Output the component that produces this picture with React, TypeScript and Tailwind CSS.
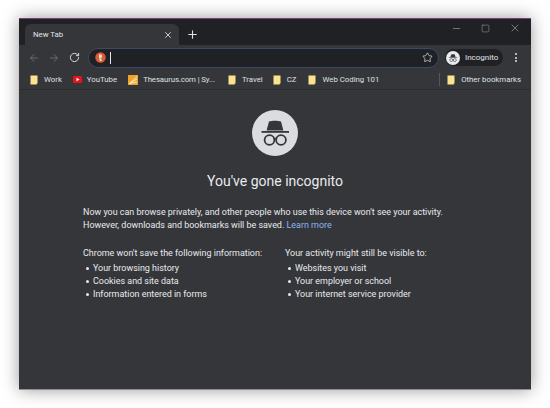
import { ArrowLeft, ArrowRight, RotateCw, Star, X, Plus, Minus, Square } from 'lucide-react';

function Folder() {
  return (
    <svg width="8" height="10" viewBox="0 0 8 10" className="shrink-0">
      <path d="M0.500 0.500h7v7.500l-1 1.500h-6z" fill="#fbe38e" />
      <path d="M6.500 8.300h1l-1 1.200z" fill="#c9a94a" />
    </svg>
  );
}

function Bookmark({ label, icon, className }: { label: string; icon: React.ReactNode; className: string }) {
  return (
    <div className={`flex items-center ${className}`}>
      {icon}
      <span className="whitespace-nowrap">{label}</span>
    </div>
  );
}

function Spy({ size, color, bg }: { size: number; color: string; bg: string }) {
  return (
    <svg width={size} height={size} viewBox="0 0 46 46">
      <path d="M17 11.500c3-1 9-1 12 0l2.400 9h-16.800z" fill={color} />
      <rect x="9.500" y="21" width="27.500" height="1.800" fill={color} />
      <circle cx="17.500" cy="30" r="4.900" fill={bg} stroke={color} strokeWidth="1.800" />
      <circle cx="29" cy="30" r="4.900" fill={bg} stroke={color} strokeWidth="1.800" />
      <path d="M21.500 29c1.200-.7 2.400-.7 3.600 0" fill="none" stroke={color} strokeWidth="1.600" />
    </svg>
  );
}

export default function App() {
  return (
    <div className="w-[550px] h-[408px] bg-white pt-[18px] pl-[19px] overflow-hidden" style={{ fontFamily: 'Roboto, sans-serif' }}>
      <div className="w-[512px] h-[372px] flex flex-col bg-[#35363a] border-t border-t-[#7a3f78] border-b border-b-[#8f918e] shadow-[0_0_16px_rgba(0,0,0,0.4)]">
        {/* tab strip */}
        <div className="h-[26px] shrink-0 bg-[#202124] flex items-end pl-[6px]">
          <div className="w-[154px] h-[21px] bg-[#35363a] rounded-t-[6px] flex items-center pl-[8px] pr-[6px] justify-between">
            <span className="text-[7.8px] text-[#e3e4e6]">New Tab</span>
            <X size={10} strokeWidth={2} className="text-[#e3e4e6]" />
          </div>
          <Plus size={13} strokeWidth={2} className="text-[#dfe1e5] ml-[7px] mb-[4px]" />
          <div className="ml-auto flex items-center self-start mt-[3px] text-[#d0d2d5]">
            <Minus size={11} strokeWidth={1} />
            <Square size={9} strokeWidth={1} className="ml-[19px]" />
            <X size={12} strokeWidth={1} className="ml-[19px] mr-[10px]" />
          </div>
        </div>
        {/* toolbar */}
        <div className="h-[25px] shrink-0 bg-[#35363a] flex items-center pl-[9px]">
          <ArrowLeft size={12} strokeWidth={1.6} className="text-[#75777b]" />
          <ArrowRight size={12} strokeWidth={1.6} className="text-[#75777b] ml-[8px]" />
          <RotateCw size={11} strokeWidth={2} className="text-[#e3e4e6] ml-[9px]" />
          <div className="ml-[8px] w-[351px] h-[20px] rounded-full bg-[#202124] border-[1.5px] border-[#3c4a63] flex items-center pl-[6px] pr-[5px]">
            <svg width="11" height="11" viewBox="0 0 11 11" className="shrink-0">
              <circle cx="5.500" cy="5.500" r="5.200" fill="#de5833" />
              <path d="M4 2.400c1.600-.6 3 .2 3 1.700 0 1-.5 1.400-.6 2.200l.4 2.600H4.800L4 4.600z" fill="#f4e4dc" />
              <circle cx="6.400" cy="6.400" r="1" fill="#67b346" />
            </svg>
            <div className="w-px h-[12px] bg-[#e3e4e6] ml-[4px]" />
            <Star size={11} strokeWidth={1.6} className="text-[#dfe1e5] ml-auto" />
          </div>
          <div className="ml-[6px] w-[58px] h-[17px] rounded-full bg-[#202124] flex items-center pl-[1px]">
            <div className="w-[14px] h-[14px] rounded-full bg-[#e8eaed] flex items-center justify-center overflow-hidden">
              <Spy size={14} color="#35363a" bg="#e8eaed" />
            </div>
            <span className="text-[8px] text-[#e3e4e6] ml-[5px]">Incognito</span>
          </div>
          <div className="ml-[12px] flex flex-col gap-[1.5px]">
            <div className="w-[2px] h-[2px] rounded-full bg-[#dfe1e5]" />
            <div className="w-[2px] h-[2px] rounded-full bg-[#dfe1e5]" />
            <div className="w-[2px] h-[2px] rounded-full bg-[#dfe1e5]" />
          </div>
        </div>
        {/* bookmarks bar */}
        <div className="h-[20px] shrink-0 bg-[#35363a] border-b border-b-[#2b2c2f] flex items-center pl-[11px] text-[7.8px] text-[#dfe1e5]">
          <Bookmark label="Work" icon={<Folder />} className="gap-[6px]" />
          <Bookmark
            className="gap-[5px] ml-[11px]"
            label="YouTube"
            icon={
              <svg width="9" height="7" viewBox="0 0 9 7">
                <rect width="9" height="7" rx="1.600" fill="#e8141c" />
                <path d="M3.500 1.800v3.400l3-1.700z" fill="#fff" />
              </svg>
            }
          />
          <Bookmark
            className="gap-[5px] ml-[11px] tracking-[-0.1px]"
            label="Thesaurus.com | Sy..."
            icon={
              <svg width="10" height="10" viewBox="0 0 10 10">
                <rect width="10" height="10" fill="#eda32e" />
                <path d="M1.500 8.500L9 1.500M1.500 8.500L9 4M1.500 8.500L9 7" stroke="#fdf0c8" strokeWidth="0.9" />
              </svg>
            }
          />
          <Bookmark label="Travel" icon={<Folder />} className="gap-[6px] ml-[13px]" />
          <Bookmark label="CZ" icon={<Folder />} className="gap-[6px] ml-[10px]" />
          <Bookmark label="Web Coding 101" icon={<Folder />} className="gap-[6px] ml-[12px]" />
          <div className="w-px h-[13px] bg-[#55575b] ml-auto" />
          <Bookmark label="Other bookmarks" icon={<Folder />} className="gap-[6px] ml-[7px] mr-[10px]" />
        </div>
        {/* page */}
        <div className="flex-1 flex flex-col items-center pt-[20px]">
          <div className="w-[46px] h-[46px] rounded-full bg-[#dadce0] flex items-center justify-center">
            <Spy size={46} color="#35363a" bg="#dadce0" />
          </div>
          <h1 className="text-[14px] leading-[18px] text-[#e8eaed] mt-[16px]">You've gone incognito</h1>
          <div className="w-full pl-[64px] mt-[16px] text-[8.95px] leading-[13px] text-[#e8eaed]">
            <p>Now you can browse privately, and other people who use this device won't see your activity.</p>
            <p>
              However, downloads and bookmarks will be saved. <span className="text-[#8ab4f8]">Learn more</span>
            </p>
            <div className="flex mt-[15px]">
              <div className="w-[202px]">
                <div>Chrome won't save the following information:</div>
                <ul className="mt-[2px]">
                  {['Your browsing history', 'Cookies and site data', 'Information entered in forms'].map((t) => (
                    <li key={t} className="flex items-center pl-[3px] gap-[4px]">
                      <span className="w-[3px] h-[3px] rounded-full bg-[#e8eaed]" />
                      {t}
                    </li>
                  ))}
                </ul>
              </div>
              <div>
                <div>Your activity might still be visible to:</div>
                <ul className="mt-[2px]">
                  {['Websites you visit', 'Your employer or school', 'Your internet service provider'].map((t) => (
                    <li key={t} className="flex items-center pl-[3px] gap-[4px]">
                      <span className="w-[3px] h-[3px] rounded-full bg-[#e8eaed]" />
                      {t}
                    </li>
                  ))}
                </ul>
              </div>
            </div>
          </div>
        </div>
      </div>
    </div>
  );
}
